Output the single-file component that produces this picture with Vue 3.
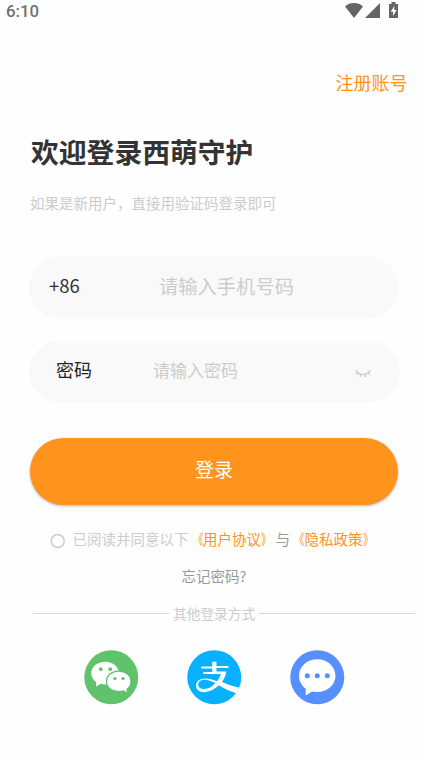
<script setup>
import { ref } from 'vue'

const phone = ref('')
const password = ref('')
</script>

<template>
  <main class="screen">
    <header class="status">
      <span class="time">6:10</span>
      <svg class="status-icons" width="56" height="20" viewBox="0 0 56 20">
        <path d="M0 6.4C2.3 4.1 5.3 3 9 3s6.700 1.100 9 3.400L9 18z" />
        <path d="M35 3v15H20z" />
        <path d="M46.500 2h4v2h2.500v14h-9V4h2.500z" />
        <path class="bolt" d="M49.300 6l-3.600 5.700h2.400v4.300l3.500-6h-2.300z" />
      </svg>
    </header>

    <a class="register">注册账号</a>
    <h1 class="title">欢迎登录西萌守护</h1>
    <p class="subtitle">如果是新用户，直接用验证码登录即可</p>

    <form class="form" @submit.prevent>
      <label class="field phone">
        <span class="label">+86</span>
        <input v-model="phone" type="tel" placeholder="请输入手机号码" />
      </label>
      <label class="field password">
        <span class="label">密码</span>
        <input v-model="password" type="password" placeholder="请输入密码" />
        <svg class="eye" width="16" height="10" viewBox="0 0 16 10">
          <path d="M.6 1.200Q3.200 5.500 8 5.500t7.400-4.300M2.800 3.800L1.200 5.600M5.900 5.200L5.200 8M10.100 5.200l.7 2.800M13.200 3.800L14.800 5.600" />
        </svg>
      </label>
      <button class="submit">登录</button>
    </form>

    <div class="agreement">
      <svg class="radio" width="16" height="16" viewBox="0 0 16 16"><circle cx="7.700" cy="8" r="6.500" /></svg>
      <span>已阅读并同意以下</span>
      <a><i class="open">《</i>用户协议<i class="close">》</i></a>
      <span class="and">与</span>
      <a><i class="open">《</i>隐私政策<i class="close">》</i></a>
    </div>

    <a class="forgot">忘记密码?</a>

    <div class="divider"><span>其他登录方式</span></div>

    <nav class="providers">
      <svg width="55" height="55" viewBox="0.250 0.250 55 55">
        <circle cx="27.500" cy="27.500" r="27" fill="#60c26b" />
        <path fill="#fff" d="M21.500 12C13.500 12 7.500 17 7.500 23.600c0 3.600 1.900 6.700 5 8.800l-.3 4.300 5-2.600c1.500.4 2.900.6 4.500.6 7.700 0 13.600-4.800 13.600-11.100S29.200 12 21.500 12z" />
        <path fill="#fff" stroke="#60c26b" stroke-width="1.300" d="M35 21.300c-6.900 0-12.300 4.500-12.300 10.400S28.100 42 35 42c1.800 0 3.500-.3 5-.8l4 2.500-.7-4.300c2.500-1.900 4-4.600 4-7.700 0-5.900-5.400-10.400-12.300-10.400z" />
        <g fill="#60c26b">
          <circle cx="17" cy="19.400" r="1.900" /><circle cx="26.500" cy="19.400" r="1.900" />
          <circle cx="31.200" cy="28.800" r="1.600" /><circle cx="39.300" cy="28.800" r="1.600" />
        </g>
      </svg>
      <svg width="55" height="55" viewBox="0.250 0.250 55 55">
        <defs><clipPath id="disc"><circle cx="27.500" cy="27.500" r="27" /></clipPath></defs>
        <circle cx="27.500" cy="27.500" r="27" fill="#08b1ff" />
        <g clip-path="url(#disc)">
          <path fill="#fff" d="M25.500 12h4.200v4.300h12v1.900h-12v3.600h10c-.8 4-2.400 7.500-4.600 10.500 5.100 2.300 10.700 3.900 20 6.500l-3.300 5.500c-8.500-2.500-14.300-5.400-19.700-8.700-4.500 4.100-9.700 6.800-14.800 6.800-5 0-8-2.600-8-6.600 0-4.100 3.600-7.100 8.600-7.100 4.200 0 8.200 1.200 12.400 2.700 1.700-2.100 3-4.500 3.800-7.200H16.500v-1.900h9v-3.600H14.500v-1.900h11z" />
          <path fill="#08b1ff" d="M28.600 33.300c-3.800-2-7.300-3.300-10.800-3.300-3.900 0-6.300 2-6.300 4.800 0 2.900 2.200 4.500 5.800 4.500 4.200 0 8.200-2.300 11.300-6z" />
        </g>
      </svg>
      <svg width="55" height="55" viewBox="0.250 0.250 55 55">
        <circle cx="27.500" cy="27.500" r="27" fill="#568ffe" />
        <path fill="#fff" d="M27.500 9.500C17.300 9.500 9.300 16.700 9.300 26c0 5.300 2.600 10 6.700 13v6.800l6.300-4.100c1.700.4 3.400.6 5.200.6 10.200 0 18.200-7.200 18.200-16.300S37.700 9.500 27.500 9.500z" />
        <g fill="#568ffe"><circle cx="17.500" cy="26" r="2.500" /><circle cx="27.500" cy="26" r="2.500" /><circle cx="37.500" cy="26" r="2.500" /></g>
      </svg>
    </nav>
  </main>
</template>

<style>
body {
  background: #fefefe;
}
</style>

<style scoped>
.screen {
  box-sizing: border-box;
  width: 427px;
  height: 759px;
  overflow: hidden;
  display: flex;
  flex-direction: column;
  background: #fefefe;
  font-family: "Noto Sans CJK SC", sans-serif;
  white-space: nowrap;
}

.status {
  display: flex;
  justify-content: space-between;
  height: 22px;
  padding: 0 26px 0 6px;
}

.time {
  font: 500 16.800px/23px Roboto, sans-serif;
  color: #707070;
}

.status-icons {
  fill: #656565;
}

.bolt {
  fill: #fefefe;
}

.register {
  align-self: flex-end;
  margin: 47px 19.500px 0 0;
  font-size: 18px;
  line-height: 26px;
  color: #ff931b;
}

.title {
  margin: 36px 0 0 31px;
  font-size: 27.800px;
  line-height: 40px;
  font-weight: 700;
  color: #333;
}

.subtitle {
  margin: 21px 0 0 30px;
  font-size: 14.500px;
  line-height: 22px;
  color: #ccc;
}

.form {
  display: flex;
  flex-direction: column;
  margin: 42px 27px 0 29px;
}

.field {
  box-sizing: border-box;
  display: flex;
  align-items: center;
  border-radius: 32px;
  background: #f9f9f9;
  color: #333;
}

.phone {
  width: 370px;
  height: 63px;
  padding: 0 20px 3px;
}

.phone .label {
  width: 110px;
  padding-bottom: 2px;
  font-size: 18.500px;
}

.phone input {
  font-size: 19.300px;
}

.password {
  width: 371px;
  height: 61px;
  margin-top: 22px;
  padding: 0 29px 5px 27px;
}

.password .label {
  width: 97px;
  padding-bottom: 1px;
  font-size: 18px;
  color: #222;
}

.password input {
  font-size: 17px;
}

.field input {
  flex: 1;
  min-width: 0;
  padding: 0;
  border: 0;
  outline: 0;
  background: transparent;
  font-family: inherit;
  color: #333;
}

.field input::placeholder {
  color: #ccc;
  opacity: 1;
}

.eye {
  margin-top: 10px;
  fill: none;
  stroke: #ccc;
  stroke-width: 1.400;
}

.submit {
  width: 368px;
  height: 67px;
  margin: 36px 0 0 1px;
  padding: 0 0 6px;
  border: 0;
  border-radius: 34px;
  background: #ff931b;
  box-shadow: 0 1px 3px rgba(0, 0, 0, 0.3);
  font: 400 19px/28px "Noto Sans CJK SC", sans-serif;
  color: #fff;
}

.agreement {
  display: flex;
  align-items: center;
  height: 22px;
  margin: 23px 0 0 50px;
  font-size: 14.500px;
  line-height: 22px;
  color: #ccc;
}

.radio {
  margin: 3px 6.500px 0 0;
  fill: none;
  stroke: #ccc;
  stroke-width: 1.500;
}

.agreement a {
  color: #ff931b;
}

.agreement i {
  display: inline-block;
  width: 14.500px;
  font-style: normal;
}

.agreement .open {
  transform: scaleX(0.720);
  transform-origin: 14.500px 50%;
}

.agreement .close {
  transform: scaleX(0.720);
  transform-origin: 0 50%;
}

.agreement .and {
  color: #999;
}

.forgot {
  margin: 15px 0 0 181.500px;
  font-size: 14.500px;
  line-height: 22px;
  color: #999;
}

.divider {
  display: grid;
  grid-template-columns: 136px 82px 1fr;
  column-gap: 4px;
  align-items: center;
  height: 20px;
  margin: 16px 12px 0 33px;
  font-size: 13.700px;
  line-height: 20px;
  color: #ccc;
}

.divider::before,
.divider::after {
  content: "";
  height: 1px;
  background: #d8d8d8;
}

.providers {
  display: flex;
  gap: 48px;
  margin: 27px 0 0 84px;
}
</style>
